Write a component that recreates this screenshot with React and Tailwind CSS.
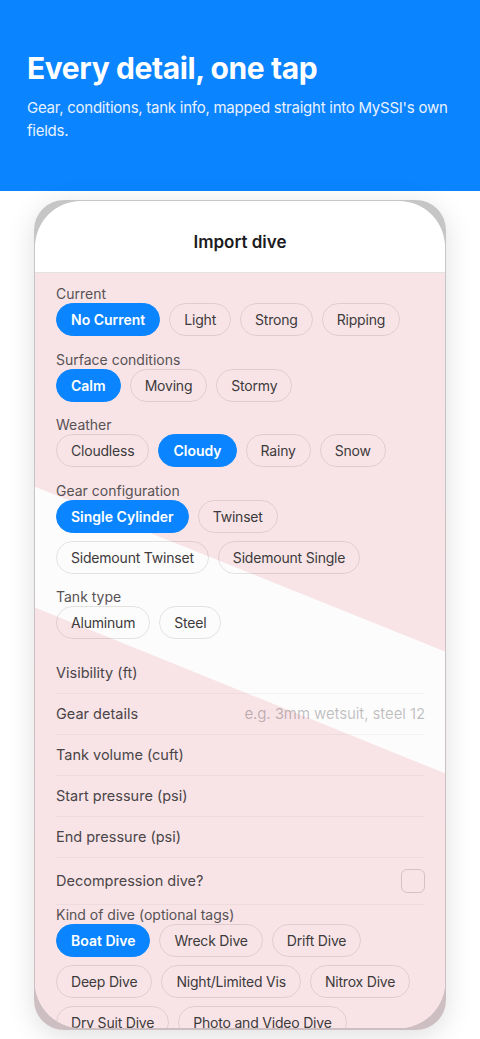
const SECTIONS = [
  { label: 'Current', rows: [['No Current', 'Light', 'Strong', 'Ripping']], selected: 'No Current' },
  { label: 'Surface conditions', rows: [['Calm', 'Moving', 'Stormy']], selected: 'Calm' },
  { label: 'Weather', rows: [['Cloudless', 'Cloudy', 'Rainy', 'Snow']], selected: 'Cloudy' },
  {
    label: 'Gear configuration',
    rows: [['Single Cylinder', 'Twinset'], ['Sidemount Twinset', 'Sidemount Single']],
    selected: 'Single Cylinder',
  },
  { label: 'Tank type', rows: [['Aluminum', 'Steel']], selected: null },
];

const FIELDS = [
  { label: 'Visibility (ft)' },
  { label: 'Gear details', placeholder: 'e.g. 3mm wetsuit, steel 12' },
  { label: 'Tank volume (cuft)' },
  { label: 'Start pressure (psi)' },
  { label: 'End pressure (psi)' },
];

const DIVE_TAGS = [
  ['Boat Dive', 'Wreck Dive', 'Drift Dive'],
  ['Deep Dive', 'Night/Limited Vis', 'Nitrox Dive'],
  ['Dry Suit Dive', 'Photo and Video Dive'],
];

const Chip = ({ label, active }) => (
  <span
    className={`h-[33px] px-[14px] rounded-full border flex items-center text-[14px] whitespace-nowrap ${
      active
        ? 'bg-[#0a84ff] border-[#0a84ff] text-white font-semibold'
        : 'border-black/10 text-[#3d3a3b] tracking-[-0.2px]'
    }`}
  >
    {label}
  </span>
);

const ChipRows = ({ rows, selected }) => (
  <div className="flex flex-col gap-2">
    {rows.map((row, i) => (
      <div key={i} className="flex gap-[9px]">
        {row.map((item) => (
          <Chip key={item} label={item} active={item === selected} />
        ))}
      </div>
    ))}
  </div>
);

export default function App() {
  return (
    <div className="h-[1039px] overflow-hidden bg-white" style={{ fontFamily: 'Inter, "Noto Sans", sans-serif' }}>
      {/* Hero */}
      <div className="bg-[#0a84ff] h-[191px] px-[27px] pt-[50px]">
        <h1 className="text-white text-[30px] leading-[36px] font-bold tracking-[-0.4px]">Every detail, one tap</h1>
        <p className="mt-[10px] text-[#e8f1ff] text-[15px] leading-[23px] tracking-[-0.25px]">
          <span className="whitespace-nowrap">Gear, conditions, tank info, mapped straight into MySSI's own</span>
          <br />
          fields.
        </p>
      </div>

      {/* Phone */}
      <div className="mx-[34px] mt-[9px] h-[830px] rounded-[30px] pt-px px-px pb-[2px] bg-gradient-to-b from-[#c6c6c6] to-[#cdbec2] shadow-[0_6px_28px_rgba(0,0,0,0.13)]">
        <div className="h-full rounded-[46px] overflow-hidden bg-white flex flex-col">
          <div className="h-[72px] shrink-0 pt-[12px] flex items-center justify-center border-b border-[#e3e3e3]">
            <span className="text-[17px] font-semibold text-[#1c1c1e]">Import dive</span>
          </div>

          <div className="relative flex-1 bg-[#f8e4e7] overflow-hidden">
            {/* dive flag stripe */}
            <svg className="absolute inset-0 w-full h-full" viewBox="0 0 410 756" preserveAspectRatio="none">
              <polygon points="0,214 410,379 410,501 0,335" fill="#fdfcfc" />
            </svg>

            <div className="relative pt-[12px] pl-[21px] pr-[20px]">
              <div className="flex flex-col gap-[14.5px]">
                {SECTIONS.map((s) => (
                  <div key={s.label}>
                    <div className="text-[14px] leading-[18px] text-[#575254]">{s.label}</div>
                    <ChipRows rows={s.rows} selected={s.selected} />
                  </div>
                ))}
              </div>

              <div className="mt-[14px]">
                {FIELDS.map((f) => (
                  <div key={f.label} className="h-[41px] flex items-center justify-between border-b border-black/[0.04]">
                    <span className="text-[14.5px] text-[#4a4547]">{f.label}</span>
                    {f.placeholder && <span className="text-[15px] text-black/25 tracking-[-0.1px]">{f.placeholder}</span>}
                  </div>
                ))}
                <div className="h-[47px] flex items-center justify-between border-b border-black/[0.04]">
                  <span className="text-[14.5px] text-[#4a4547]">Decompression dive?</span>
                  <span className="w-6 h-6 rounded-md border border-black/15" />
                </div>
              </div>

              <div className="pt-px">
                <div className="text-[14px] leading-[18px] text-[#575254]">Kind of dive (optional tags)</div>
                <ChipRows rows={DIVE_TAGS} selected="Boat Dive" />
              </div>
            </div>
          </div>
        </div>
      </div>
    </div>
  );
}
